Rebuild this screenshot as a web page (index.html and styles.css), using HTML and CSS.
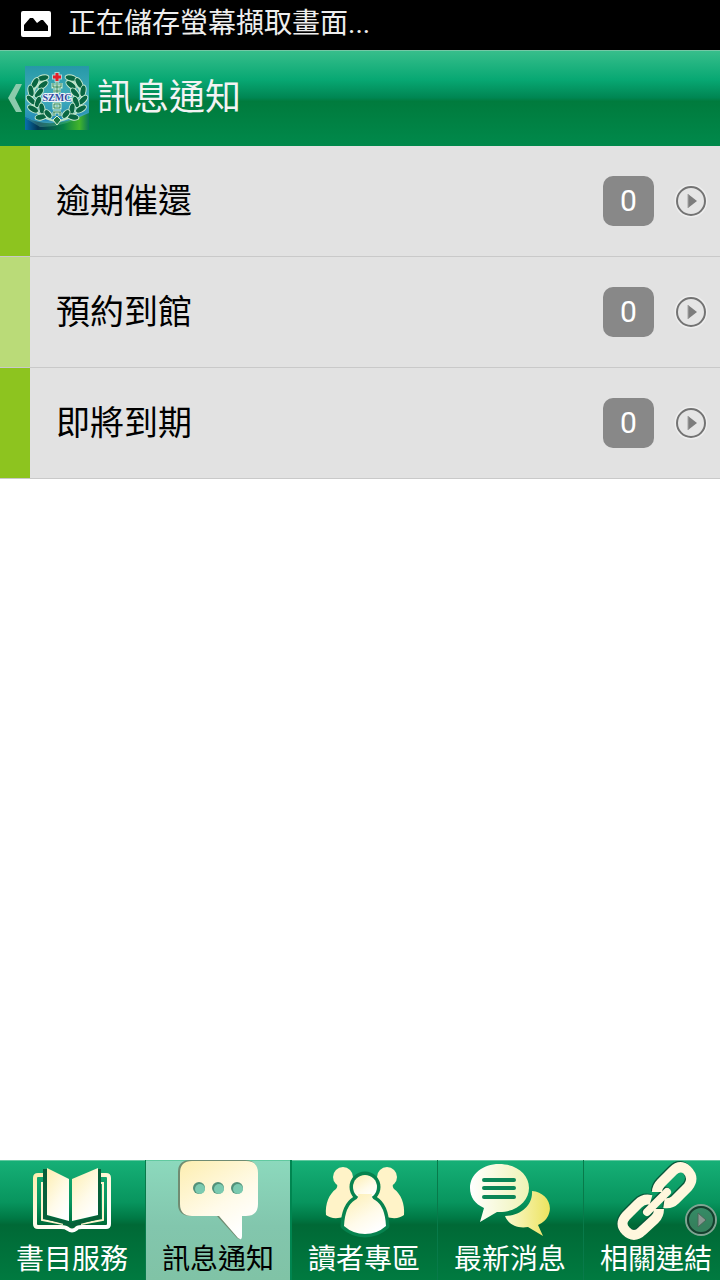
FILE: index.html
```html
<!DOCTYPE html>
<html lang="zh-Hant">
	<head>
		<meta charset="utf-8">
		<meta name="viewport" content="width=device-width, initial-scale=1">
		<title>訊息通知</title>
		<link rel="stylesheet" href="styles.css">
	</head>

	<body>
		<div class="statusbar">
			<svg class="picture" viewBox="0 0 30 26" aria-hidden="true">
				<rect width="30" height="26" rx="2" fill="#fff"/>
				<path d="M3 20V14L9 7H12L16 12L20 9H22L27 15V20Z" fill="#000"/>
			</svg>
			<span>正在儲存螢幕擷取畫面...</span>
		</div>

		<header class="titlebar">
			<a class="back" href="#" aria-label="返回">
				<svg class="chevron" viewBox="0 0 14 28" aria-hidden="true">
					<path d="M8 0H14L7 14L14 28H8L0 14Z" fill="#8bcbac"/>
				</svg>
				<svg class="logo" viewBox="0 0 64 64" aria-hidden="true">
					<defs>
						<linearGradient id="sky" x1="0" y1="0" x2="0" y2="1">
							<stop offset="0" stop-color="#2698a8"/>
							<stop offset=".5" stop-color="#43aebb"/>
							<stop offset="1" stop-color="#147bb4"/>
						</linearGradient>
						<linearGradient id="sea" x1="0" y1="0" x2="1" y2="0">
							<stop offset="0" stop-color="#0870ae"/>
							<stop offset=".2" stop-color="#033653"/>
							<stop offset=".6" stop-color="#058246"/>
							<stop offset=".85" stop-color="#43b42b"/>
							<stop offset="1" stop-color="#087858"/>
						</linearGradient>
						<g id="branch">
							<path d="M30 55Q8 50 7 34Q7 21 20 13" fill="none" stroke="#b9e3c6" stroke-width="2"/>
							<g fill="#096642" stroke="#c7ead0">
								<ellipse cx="18" cy="12" rx="6" ry="3" transform="rotate(-12 18 12)"/>
								<ellipse cx="10" cy="17" rx="6" ry="3" transform="rotate(-60 10 17)"/>
								<ellipse cx="18" cy="19" rx="6" ry="3" transform="rotate(-38 18 19)"/>
								<ellipse cx="6" cy="25" rx="6" ry="3" transform="rotate(-100 6 25)"/>
								<ellipse cx="14" cy="27" rx="6" ry="3" transform="rotate(-50 14 27)"/>
								<ellipse cx="6" cy="34" rx="6" ry="3" transform="rotate(-135 6 34)"/>
								<ellipse cx="13" cy="36" rx="6" ry="3" transform="rotate(-72 13 36)"/>
								<ellipse cx="8" cy="43" rx="6" ry="3" transform="rotate(-150 8 43)"/>
								<ellipse cx="17" cy="43" rx="6" ry="3" transform="rotate(-100 17 43)"/>
								<ellipse cx="16" cy="51" rx="6" ry="3" transform="rotate(-10 16 51)"/>
								<ellipse cx="23" cy="48" rx="5" ry="3" transform="rotate(50 23 48)"/>
							</g>
						</g>
					</defs>
					<rect width="64" height="64" fill="url(#sky)"/>
					<path d="M0 51Q26 65 64 47V64H0Z" fill="url(#sea)"/>
					<path d="M0 52Q28 61 64 46Q40 62 15 61Z" fill="#75cbb0" opacity=".3"/>
					<use href="#branch"/>
					<use href="#branch" transform="translate(64 0) scale(-1 1)"/>
					<g fill="none" stroke="#d7f0cf" stroke-width="3">
						<path id="seal" d="M28 17V21H36V17M32 16V28M28 25H36M29 38H35V42H29ZM28 46H36M29 46V50M35 46V50"/>
					</g>
					<use href="#seal" fill="none" stroke="#2e8260"/>
					<path d="M32 50L36 54L32 59L28 54Z" fill="#197849" stroke="#d7f0cf"/>
					<path d="M32 6V16M27 11H37" stroke="#a9d5d5" stroke-width="5"/>
					<path d="M32 7V15M28 11H36" stroke="#e3202a" stroke-width="3"/>
					<text x="32" y="35" text-anchor="middle" class="logotext">SZMC</text>
				</svg>
			</a>
			<h1>訊息通知</h1>
		</header>

		<main>
			<ul class="notices">
				<li>
					<a href="#">
						<span class="name">逾期催還</span>
						<span class="count">0</span>
						<svg class="go" viewBox="0 0 34 34" aria-hidden="true">
							<circle cx="17" cy="17" r="15" fill="none" stroke="#eeeeee" stroke-width="3"/>
							<circle cx="17" cy="17" r="14" fill="#e5e5e5" stroke="#737373" stroke-width="2"/>
							<path d="M14 10L23 17L14 24Z" fill="#7d7d7d"/>
							<path d="M14 10V24" stroke="#a5a5a5"/>
						</svg>
					</a>
				</li>
				<li>
					<a href="#">
						<span class="name">預約到館</span>
						<span class="count">0</span>
						<svg class="go" viewBox="0 0 34 34" aria-hidden="true">
							<circle cx="17" cy="17" r="15" fill="none" stroke="#eeeeee" stroke-width="3"/>
							<circle cx="17" cy="17" r="14" fill="#e5e5e5" stroke="#737373" stroke-width="2"/>
							<path d="M14 10L23 17L14 24Z" fill="#7d7d7d"/>
							<path d="M14 10V24" stroke="#a5a5a5"/>
						</svg>
					</a>
				</li>
				<li>
					<a href="#">
						<span class="name">即將到期</span>
						<span class="count">0</span>
						<svg class="go" viewBox="0 0 34 34" aria-hidden="true">
							<circle cx="17" cy="17" r="15" fill="none" stroke="#eeeeee" stroke-width="3"/>
							<circle cx="17" cy="17" r="14" fill="#e5e5e5" stroke="#737373" stroke-width="2"/>
							<path d="M14 10L23 17L14 24Z" fill="#7d7d7d"/>
							<path d="M14 10V24" stroke="#a5a5a5"/>
						</svg>
					</a>
				</li>
			</ul>
		</main>

		<div class="tabbar">
			<nav class="tabs">
				<a class="tab" href="#">
					<svg class="icon" viewBox="0 0 80 80" aria-hidden="true">
						<defs>
							<linearGradient id="cream" x1="0" y1="0" x2=".6" y2="1">
								<stop offset="0" stop-color="#fdeeb0"/>
								<stop offset=".65" stop-color="#fffbea"/>
								<stop offset="1" stop-color="#fff"/>
							</linearGradient>
						</defs>
						<path d="M12 15H6Q3 15 3 18V64Q3 67 6 67H29Q34 67 36 69Q40 72 44 69Q45 67 50 67H74Q77 67 77 64V18Q77 15 74 15H69" fill="none" stroke="url(#cream)" stroke-width="4"/>
						<path d="M13 23H10V60L31 64M67 23H71V60L49 64" fill="none" stroke="#fff5cf" stroke-width="2"/>
						<path d="M13 9V57L36 63Q40 67 44 63L67 57V9" fill="none" stroke="#066039" stroke-width="4"/>
						<path d="M15 8L37 19V61L15 55Z" fill="url(#cream)"/>
						<path d="M66 8L40 19V61L66 55Z" fill="url(#cream)"/>
					</svg>
					<span>書目服務</span>
				</a>
				<a class="tab current" href="#" aria-current="page">
					<svg class="icon" viewBox="0 0 80 80" aria-hidden="true">
						<path d="M13 0H67Q79 0 79 12V44Q79 56 67 56H63V76Q63 81 59 78L39 56H13Q0 56 0 44V12Q0 0 13 0Z" fill="#708c72"/>
						<path d="M14 1H68Q80 1 80 13V44Q80 56 68 56H64V76Q64 81 60 78L41 56H14Q2 56 2 44V13Q2 1 14 1Z" fill="url(#cream)"/>
						<g fill="#52917a">
							<circle cx="21" cy="28" r="6"/>
							<circle cx="40" cy="28" r="6"/>
							<circle cx="59" cy="28" r="6"/>
						</g>
						<g fill="#7bcab0">
							<circle cx="22" cy="29" r="5"/>
							<circle cx="41" cy="29" r="5"/>
							<circle cx="60" cy="29" r="5"/>
						</g>
					</svg>
					<span>訊息通知</span>
				</a>
				<a class="tab" href="#">
					<svg class="icon" viewBox="0 0 80 80" aria-hidden="true">
						<defs>
							<g id="person" fill="#fff3c8">
								<circle cx="19" cy="17" r="10"/>
								<path d="M13 22H25L29 32V42L20 57Q8 60 2 55C1 44 5 34 12 29Q14 27 13 22Z"/>
							</g>
							<g id="reader">
								<circle cx="41" cy="27" r="12"/>
								<path d="M34 34H48Q47 38 51 40Q61 46 62 66Q53 74 41 74Q29 74 20 66Q21 46 31 40Q35 38 34 34Z"/>
							</g>
						</defs>
						<use href="#person"/>
						<use href="#person" transform="translate(82 0) scale(-1 1)"/>
						<use href="#reader" fill="#07834f" stroke="#07834f" stroke-width="7" stroke-linejoin="round"/>
						<use href="#reader" fill="url(#cream)"/>
					</svg>
					<span>讀者專區</span>
				</a>
				<a class="tab" href="#">
					<svg class="icon" viewBox="0 0 80 80" aria-hidden="true">
						<defs>
							<linearGradient id="lime">
								<stop offset="0" stop-color="#fff"/>
								<stop offset="1" stop-color="#eff3b5"/>
							</linearGradient>
							<linearGradient id="yellow">
								<stop offset="0" stop-color="#fbf9d2"/>
								<stop offset="1" stop-color="#ece35e"/>
							</linearGradient>
						</defs>
						<path d="M62 31C75 32 84 44 78 56Q75 62 68 65L73 76L58 67C47 69 38 64 35 56C50 56 63 46 62 31Z" fill="url(#yellow)"/>
						<path d="M29 4C46 4 59 14 59 28C59 42 45 53 27 52L10 62L14 48C5 44 0 37 0 28C0 14 13 4 29 4Z" fill="url(#lime)"/>
						<path d="M14 20H44M14 28H44M14 37H44" stroke="#0b8657" stroke-width="4" stroke-linecap="round"/>
					</svg>
					<span>最新消息</span>
				</a>
				<a class="tab" href="#">
					<svg class="icon" viewBox="0 0 80 80" aria-hidden="true">
						<defs>
							<g id="chain" fill="none" stroke-width="10" stroke-linejoin="round">
								<path d="M40 31Q40 26 44 22L56 10Q63 3 70 9Q78 17 71 26L58 39Q54 43 47 42"/>
								<path d="M34 39Q27 37 21 43L9 55Q2 63 9 70Q17 78 25 70L38 58Q42 54 42 48"/>
								<path d="M30 51L50 31" stroke-width="8" stroke-linecap="round"/>
							</g>
						</defs>
						<use href="#chain" stroke="#07583a"/>
						<use href="#chain" x="1" y="1" stroke="#fff7dd"/>
					</svg>
					<span>相關連結</span>
				</a>
			</nav>
			<button class="more" type="button" aria-label="更多">
				<svg viewBox="0 0 34 34" aria-hidden="true">
					<circle cx="17" cy="17" r="15" fill="#4c8b6d" fill-opacity=".7" stroke="#81a493" stroke-width="2"/>
					<circle cx="17" cy="17" r="13" fill="none" stroke="#153e2d" stroke-width="2"/>
					<path d="M14 10L22 17L14 24Z" fill="#8a9891" stroke="#48685a"/>
				</svg>
			</button>
		</div>
	</body>
</html>
```

FILE: styles.css
```css
*
{
	box-sizing:border-box;
}

body
{
	display:flex;
	flex-direction:column;
	min-height:100vh;
	margin:0;
	background-color:white;
	font-family:Roboto, "Noto Sans CJK TC", sans-serif;
}

a
{
	color:inherit;
	text-decoration:none;
}

svg
{
	display:block;
}

.statusbar
{
	display:flex;
	align-items:center;
	gap:17px;
	height:50px;
	padding:0 21px 2px;
	background-color:black;
	color:#eeeeee;
	font-size:28px;
	line-height:40px;
}

.picture
{
	width:30px;
	height:26px;
}

.titlebar
{
	display:flex;
	align-items:center;
	gap:8px;
	height:96px;
	padding:0 8px 2px;
	border-top:1px solid #75c8a6;
	background:linear-gradient(#37be8b, #08a873 30%, #008653 49%, #007b3d 53%, #00894b);
	color:#f3f3f3;
}

.back
{
	display:flex;
	align-items:center;
	gap:3px;
}

.chevron
{
	width:14px;
	height:28px;
}

.logo
{
	width:64px;
	height:64px;
}

.logotext
{
	fill:#344a9d;
	stroke:#eef4fa;
	stroke-width:2px;
	paint-order:stroke;
	font-family:"Liberation Serif", serif;
	font-size:10px;
	font-weight:bold;
}

h1
{
	margin:0;
	font-size:36px;
	font-weight:normal;
	line-height:48px;
}

main
{
	flex:1;
}

.notices
{
	margin:0;
	padding:0;
	list-style:none;
}

.notices li
{
	border-bottom:1px solid #c9c9c9;
}

.notices a
{
	display:flex;
	align-items:center;
	height:110px;
	padding-right:12px;
	border-left:30px solid #8dc41f;
	background-color:#e2e2e2;
}

.notices li:nth-child(even) a
{
	border-left-color:#badb78;
}

.name
{
	flex:1;
	padding-left:26px;
	color:black;
	font-size:34px;
	line-height:50px;
}

.count
{
	width:51px;
	margin-right:20px;
	border-radius:10px;
	background-color:#888888;
	color:white;
	font-size:30px;
	line-height:50px;
	text-align:center;
}

.go
{
	width:34px;
	height:34px;
}

.tabbar
{
	position:relative;
}

.tabs
{
	display:flex;
	overflow-x:auto;
	scrollbar-width:none;
}

.tab
{
	display:flex;
	flex:0 0 146px;
	flex-direction:column;
	align-items:center;
	height:120px;
	padding-right:1px;
	border-right:1px solid #087a4a;
	background:linear-gradient(#16b077, #08955e 35%, #007a46 48%, #006936 54%, #007a40);
	box-shadow:inset 0 1px #62c9a0;
	color:white;
	font-size:28px;
	line-height:40px;
}

.current
{
	padding-right:0;
	border-right:2px solid #008550;
	background:linear-gradient(#8cd9bd, #82c6ad 55%, #80c3a6);
	color:black;
}

.icon
{
	width:80px;
	height:80px;
	overflow:visible;
}

.more
{
	position:absolute;
	right:2px;
	top:43px;
	width:34px;
	height:34px;
	padding:0;
	border:0;
	background:none;
}
```
